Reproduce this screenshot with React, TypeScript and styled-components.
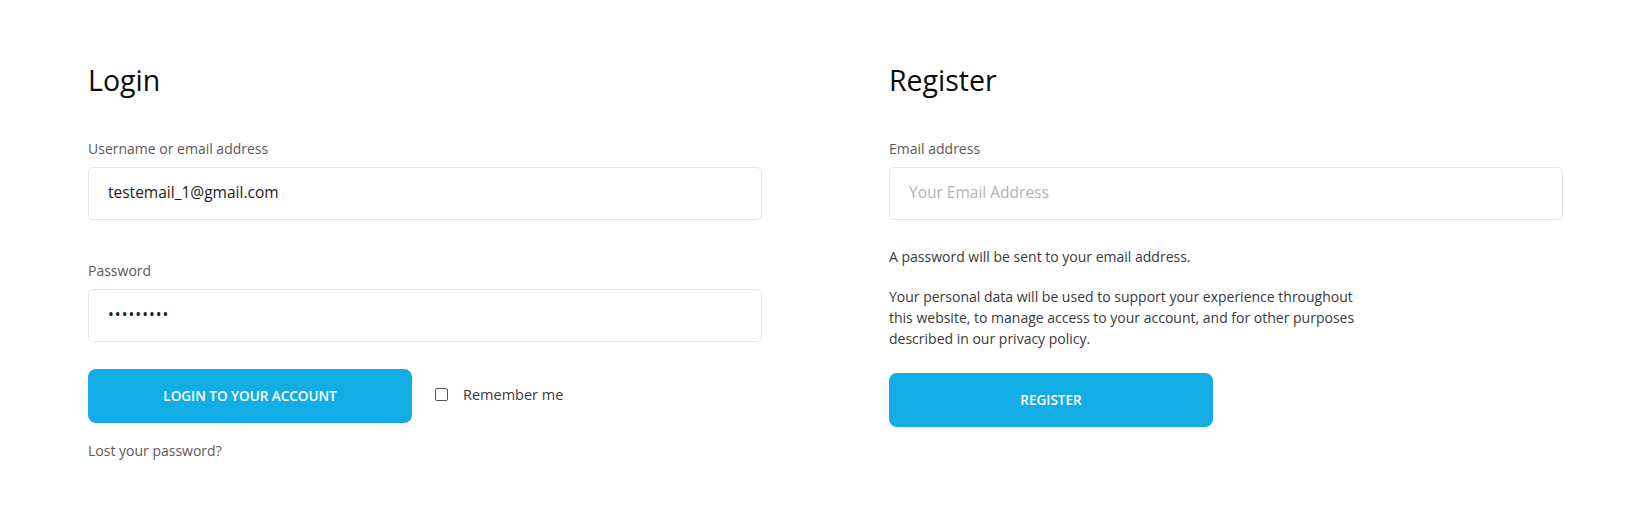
import React from "react";
import styled, { createGlobalStyle } from "styled-components";

const GlobalStyle = createGlobalStyle`
  * {
    box-sizing: border-box;
  }
  body {
    margin: 0;
    background-color: #fff;
    font-family: "Open Sans", "Liberation Sans", sans-serif;
  }
`;

const colors = {
  title: "#0b0b0b",
  label: "#5a5a5a",
  text: "#3a3a3a",
  input: "#1c1c1c",
  placeholder: "#b3b3b3",
  border: "#e6e6e6",
  accent: "#13ade6",
};

const Page = styled.div`
  padding: 62px 84px 40px 88px;
`;

const Columns = styled.div`
  display: grid;
  grid-template-columns: 674px 674px;
  column-gap: 127px;
`;

const Column = styled.section`
  display: flex;
  flex-direction: column;
`;

const Title = styled.h2`
  margin: 0 0 40px;
  font-size: 28.5px;
  line-height: 36px;
  font-weight: 400;
  color: ${colors.title};
`;

const Field = styled.div<{ spacing?: number }>`
  display: flex;
  flex-direction: column;
  margin-bottom: ${({ spacing }) => spacing ?? 40}px;
`;

const Label = styled.label`
  font-size: 14px;
  line-height: 21px;
  color: ${colors.label};
  margin-bottom: 8px;
`;

const Input = styled.input`
  height: 53px;
  width: 100%;
  padding: 0 19px 3px;
  border: 1px solid ${colors.border};
  border-radius: 5px;
  font-family: inherit;
  font-size: 15.5px;
  color: ${colors.input};
  background: #fff;
  outline: none;
  &::placeholder {
    color: ${colors.placeholder};
  }
  &[type="password"] {
    letter-spacing: 1px;
  }
`;

const Actions = styled.div`
  display: flex;
  align-items: center;
  gap: 23px;
  margin-bottom: 17px;
`;

const PrimaryButton = styled.button`
  width: 324px;
  height: 54px;
  border: 0;
  border-radius: 8px;
  background-color: ${colors.accent};
  color: #fff;
  font-family: inherit;
  font-size: 13.5px;
  font-weight: 600;
  text-transform: uppercase;
  cursor: pointer;
`;

const Remember = styled.label`
  display: flex;
  align-items: center;
  gap: 15px;
  font-size: 14.5px;
  line-height: 20px;
  color: ${colors.text};
  margin-top: -3px;
`;

const Checkbox = styled.span`
  width: 13px;
  height: 13px;
  border: 1px solid #555;
  border-radius: 2px;
`;

const Link = styled.a`
  font-size: 14px;
  line-height: 21px;
  color: ${colors.label};
  text-decoration: none;
`;

const Text = styled.p<{ spacing?: number }>`
  margin: 0 0 ${({ spacing }) => spacing ?? 19}px;
  font-size: 14px;
  line-height: 21px;
  color: ${colors.text};
`;

export default function App() {
  return (
    <Page>
      <GlobalStyle />
      <Columns>
        <Column>
          <Title>Login</Title>
          <Field>
            <Label>Username or email address</Label>
            <Input type="text" defaultValue="testemail_1@gmail.com" />
          </Field>
          <Field spacing={27}>
            <Label>Password</Label>
            <Input type="password" defaultValue="123456789" />
          </Field>
          <Actions>
            <PrimaryButton>Login to your account</PrimaryButton>
            <Remember>
              <Checkbox />
              Remember me
            </Remember>
          </Actions>
          <Link href="#">Lost your password?</Link>
        </Column>
        <Column>
          <Title>Register</Title>
          <Field spacing={26}>
            <Label>Email address</Label>
            <Input type="email" placeholder="Your Email Address" />
          </Field>
          <Text>A password will be sent to your email address.</Text>
          <Text spacing={24}>
            Your personal data will be used to support your experience throughout
            <br />
            this website, to manage access to your account, and for other purposes
            <br />
            described in our privacy policy.
          </Text>
          <PrimaryButton>Register</PrimaryButton>
        </Column>
      </Columns>
    </Page>
  );
}
